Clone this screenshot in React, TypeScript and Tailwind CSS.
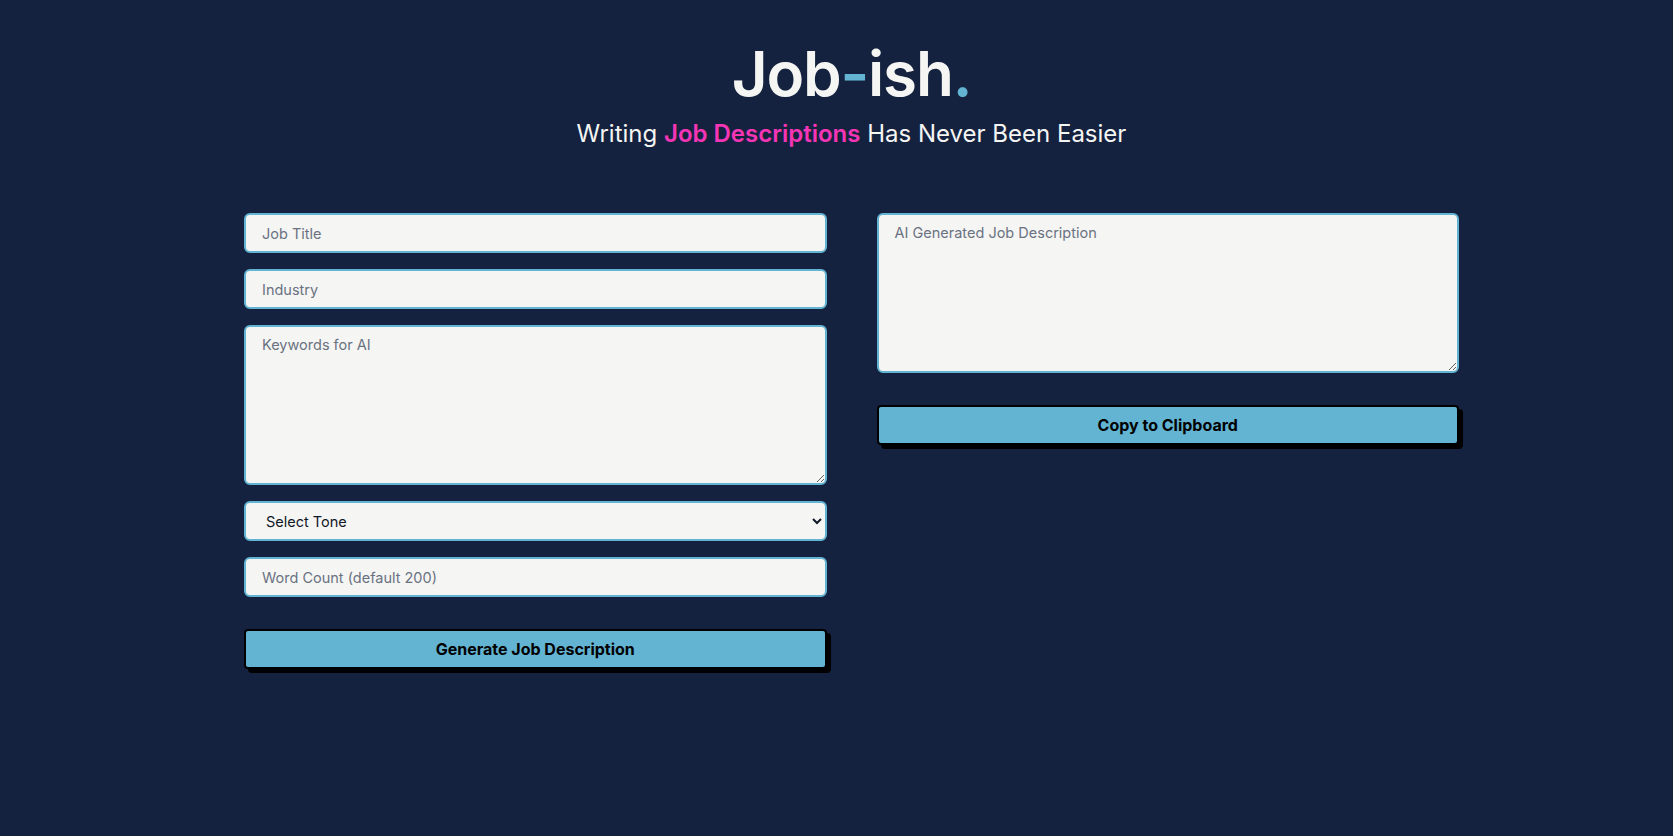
import { useState } from 'react';

const inputCls =
  'block w-full h-10 rounded-md border-2 border-[#62b4d2] bg-[#f5f5f3] px-4 text-[14.5px] text-gray-900 placeholder:text-gray-500 outline-none';

const areaCls =
  'block h-40 w-full rounded-md border-2 border-[#62b4d2] bg-[#f5f5f3] px-4 py-[7px] text-[14.5px] text-gray-900 placeholder:text-gray-500 outline-none';

const btnCls =
  'h-10 w-full rounded border-2 border-black bg-[#62b4d2] text-base font-bold text-black shadow-[4px_4px_0_0_#000]';

export default function App() {
  const [tone, setTone] = useState('');

  return (
    <div
      className="min-h-screen w-full bg-[#14223f] pl-[30px]"
      style={{ fontFamily: 'Inter, "Noto Sans", sans-serif' }}
    >
      {/* Heading */}
      <header className="pt-[36px] text-center">
        <h1 className="text-[62px] font-semibold leading-[76px] tracking-[-0.02em] text-[#f5f5f3]">
          Job<span className="text-[#62b4d2]">-</span>ish<span className="text-[#62b4d2]">.</span>
        </h1>
        <p className="mt-[8px] text-2xl leading-7 text-[#f5f5f3]">
          Writing <span className="font-semibold text-[#f535b5]">Job Descriptions</span> Has Never Been Easier
        </p>
      </header>

      {/* Form + output */}
      <main className="mx-auto mt-[65px] grid w-[1215px] grid-cols-2 gap-[50px]">
        <section className="flex flex-col gap-4">
          <input className={inputCls} placeholder="Job Title" />
          <input className={inputCls} placeholder="Industry" />
          <textarea className={areaCls} placeholder="Keywords for AI" />
          <select
            className="block h-10 w-full rounded-md border-2 border-[#62b4d2] bg-[#f5f5f3] px-4 text-[14.5px] text-gray-900 outline-none"
            value={tone}
            onChange={(e) => setTone(e.target.value)}
          >
            <option value="">Select Tone</option>
            <option value="professional">Professional</option>
            <option value="casual">Casual</option>
            <option value="friendly">Friendly</option>
          </select>
          <input className={inputCls} placeholder="Word Count (default 200)" />
          <button className={`mt-4 ${btnCls}`}>Generate Job Description</button>
        </section>

        <section className="flex flex-col">
          <textarea className={areaCls} placeholder="AI Generated Job Description" />
          <button className={`mt-8 ${btnCls}`}>Copy to Clipboard</button>
        </section>
      </main>
    </div>
  );
}
